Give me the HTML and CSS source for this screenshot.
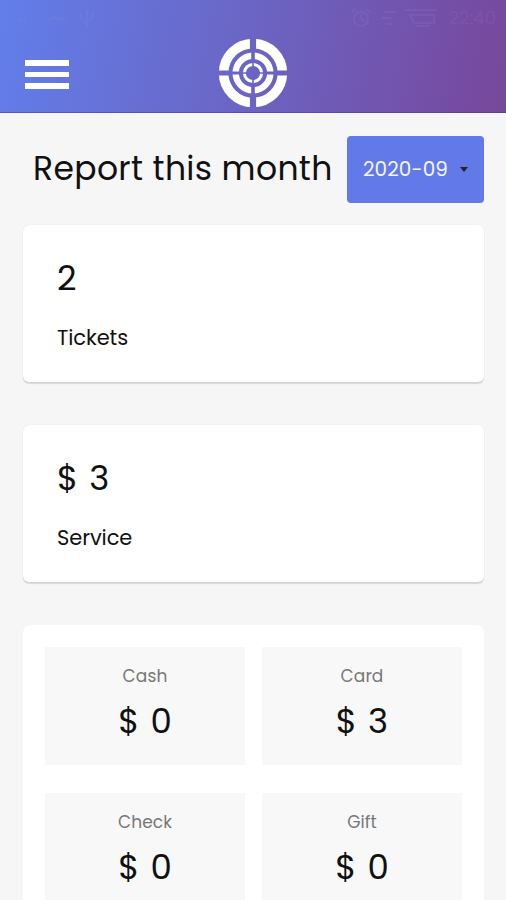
FILE: index.html
```html
<!DOCTYPE html>
<html lang="en">
<head>
    <meta charset="UTF-8">
    <meta name="viewport" content="width=device-width, initial-scale=1.0">
    <title>Report</title>
    <link rel="stylesheet" href="styles.css">
</head>
<body>

    <header class="header">
        <!-- Status bar -->
        <div class="status">
            <svg class="status-left" width="80" height="24" viewBox="0 0 80 24" fill="none" stroke="currentColor" stroke-width="2">
                <path d="M1 16v-4M5 16V9M28 14l6-3 5 3 8-2M67 3v20M61 8v4q0 3 6 4M73 6v4q0 3-6 4"/>
            </svg>
            <div class="status-right">
                <svg width="96" height="24" viewBox="0 0 96 24" fill="none" stroke="currentColor" stroke-width="2">
                    <circle cx="11" cy="13" r="7"/>
                    <path d="M11 9v4l4 2M2 6l4-3M16 3l4 3M34 6h12M32 12h10M36 18h6M55 4h32M60 9h24v8H64zM66 20h14"/>
                </svg>
                <span class="time">22:40</span>
            </div>
        </div>
        <!-- Menu and logo -->
        <div class="nav">
            <button class="menu" aria-label="Menu">
                <span></span>
                <span></span>
                <span></span>
            </button>
            <svg class="logo" width="70" height="70" viewBox="-35 -35 70 70">
                <defs>
                    <mask id="cross" maskUnits="userSpaceOnUse" x="-35" y="-35" width="70" height="70">
                        <rect x="-35" y="-35" width="70" height="70" fill="#fff"/>
                        <path d="M-3.1-35h6.2v14h-6.2zM-3.1 21h6.2v14h-6.2zM-35-2.6h14v5.2h-14zM21-2.6h14v5.2h-14z" fill="#000"/>
                        <path d="M-1.8-22h3.6v11h-3.6zM-1.8 11h3.6v11h-3.6zM-22-1.5h11v3h-11zM11-1.5h11v3h-11z" fill="#000"/>
                        <path d="M-.8-11h1.6v22h-1.6zM-11-.8h22v1.6h-22z" fill="#000"/>
                    </mask>
                </defs>
                <g fill="none" stroke="#fff" mask="url(#cross)">
                    <circle r="29.4" stroke-width="9.6"/>
                    <circle r="17.3" stroke-width="6.4"/>
                    <circle r="8.6" stroke-width="3"/>
                </g>
            </svg>
        </div>
    </header>

    <main class="container">
        <div class="title">
            <h1>Report this month</h1>
            <button class="month">
                <span>2020-09</span>
                <i class="caret"></i>
            </button>
        </div>

        <div class="card">
            <h2>2</h2>
            <p>Tickets</p>
        </div>

        <div class="card">
            <h2>$ 3</h2>
            <p>Service</p>
        </div>

        <!-- Payment types -->
        <div class="payments">
            <div class="pay">
                <p>Cash</p>
                <h3>$ 0</h3>
            </div>
            <div class="pay">
                <p>Card</p>
                <h3>$ 3</h3>
            </div>
            <div class="pay">
                <p>Check</p>
                <h3>$ 0</h3>
            </div>
            <div class="pay">
                <p>Gift</p>
                <h3>$ 0</h3>
            </div>
        </div>
    </main>

</body>
</html>
```

FILE: styles.css
```css
* {
    box-sizing: border-box;
    margin: 0;
    padding: 0;
    font-family: 'Poppins', 'Inter', sans-serif;
    font-weight: 400;
}

body {
    height: 900px;
    overflow: hidden;
    background-color: #f6f6f6;
    color: #111;
}

.header {
    height: 113px;
    background: linear-gradient(100deg, #627eea 0%, #6a67c7 45%, #764ba2 92%, #764899 100%);
    border-bottom: 1px solid rgba(60, 50, 150, 0.45);
}

.status {
    display: flex;
    justify-content: space-between;
    height: 38px;
    padding: 6px 10px 0 20px;
    color: rgba(160, 140, 215, 0.15);
}

.status-right {
    display: flex;
    gap: 3px;
}

.time {
    font-size: 18px;
    line-height: 24px;
}

.nav {
    display: grid;
    grid-template-columns: 1fr 70px 1fr;
    padding: 0 25px;
}

.menu {
    display: flex;
    flex-direction: column;
    gap: 6px;
    width: 44px;
    padding-top: 22px;
    border: none;
    background: none;
}

.menu span {
    height: 5.5px;
    width: 44px;
    background-color: #fff;
}

.container {
    padding: 23px 22px 0 23px;
}

.title {
    display: flex;
    justify-content: space-between;
    height: 67px;
    margin-bottom: 22px;
    padding-left: 10px;
}

h1 {
    font-size: 33px;
    line-height: 66px;
    letter-spacing: 0.35px;
    white-space: nowrap;
}

.month {
    display: flex;
    align-items: center;
    justify-content: space-between;
    width: 137px;
    padding: 0 16px;
    border: none;
    border-radius: 4px;
    background-color: #627ae8;
    color: #f4f6ff;
}

.month span {
    margin-top: -2px;
    font-size: 20px;
    letter-spacing: 0.1px;
}

.caret {
    border: 4px solid transparent;
    border-top: 5px solid #222;
    border-bottom: none;
}

.card {
    height: 157px;
    margin-bottom: 43px;
    padding: 33px 34px;
    border-radius: 6px;
    background-color: #fff;
    box-shadow: 0 2px 1px rgba(0, 0, 0, 0.13), 0 0 1px rgba(0, 0, 0, 0.12);
}

h2, h3 {
    font-size: 34px;
    line-height: 41px;
    word-spacing: 2px;
}

.card p {
    margin-top: 24px;
    font-size: 21px;
    line-height: 29px;
    letter-spacing: -0.1px;
}

.payments {
    display: grid;
    grid-template-columns: 200px 200px;
    grid-auto-rows: 118px;
    gap: 28px 17px;
    height: 320px;
    padding: 22px 0 0 22px;
    border-radius: 8px;
    background-color: #fff;
}

.pay {
    padding-top: 16px;
    background-color: #f8f8f8;
    text-align: center;
}

.pay p {
    color: #777;
    font-size: 17px;
    line-height: 26px;
    letter-spacing: 0.1px;
}

.pay h3 {
    margin-top: 12px;
}
```
